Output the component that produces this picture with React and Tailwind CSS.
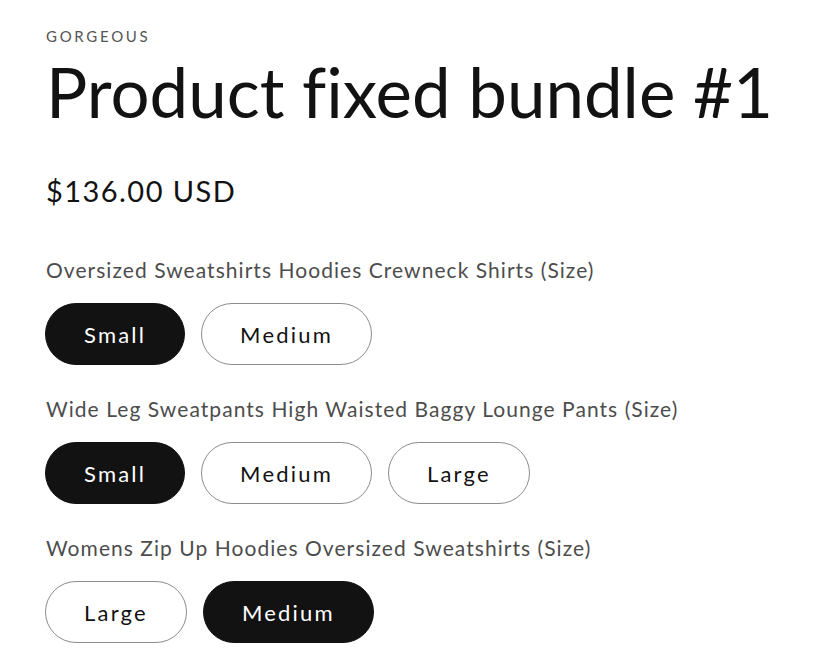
import { useState } from 'react';

const groups = [
  {
    label: 'Oversized Sweatshirts Hoodies Crewneck Shirts (Size)',
    options: ['Small', 'Medium'],
    selected: 'Small',
  },
  {
    label: 'Wide Leg Sweatpants High Waisted Baggy Lounge Pants (Size)',
    options: ['Small', 'Medium', 'Large'],
    selected: 'Small',
  },
  {
    label: 'Womens Zip Up Hoodies Oversized Sweatshirts (Size)',
    options: ['Large', 'Medium'],
    selected: 'Medium',
  },
];

function VariantPill({ value, active, onClick }) {
  const className = active
    ? 'border-[#121212] bg-[#121212] text-white'
    : 'border-[#8c8c8c] bg-white text-[#121212]';

  return (
    <button
      type="button"
      onClick={onClick}
      className={`flex h-[62px] items-center justify-center rounded-full border px-[38px] text-[22px] tracking-[0.1em] ${className}`}
    >
      {value}
    </button>
  );
}

export default function App() {
  const [picked, setPicked] = useState(groups.map((g) => g.selected));

  const choose = (index, value) => {
    setPicked((prev) => prev.map((v, i) => (i === index ? value : v)));
  };

  return (
    <div
      className="min-h-screen bg-white pl-[46px] pt-[24px] text-[#121212] [font-variant-ligatures:none]"
      style={{ fontFamily: 'Lato, "Open Sans", sans-serif' }}
    >
      <p className="h-[24px] text-[15px] leading-[24px] tracking-[0.18em] text-[#555]">
        GORGEOUS
      </p>

      <h1 className="mt-[4px] h-[80px] text-[69px] leading-[80px] tracking-[0]">
        Product fixed bundle #1
      </h1>

      <p className="mt-[41px] h-[36px] text-[29px] leading-[36px] tracking-[0.05em]">
        $136.00 USD
      </p>

      <div className="mt-[47px]">
        {groups.map((group, index) => (
          <fieldset key={group.label} className={index === 0 ? '' : 'mt-[30px]'}>
            <legend className="h-[28px] text-[21px] leading-[28px] tracking-[0.05em] text-[#4d4d4d]">
              {group.label}
            </legend>

            <div className="-ml-px mt-[19px] flex gap-[16px]">
              {group.options.map((opt) => (
                <VariantPill
                  key={opt}
                  value={opt}
                  active={picked[index] === opt}
                  onClick={() => choose(index, opt)}
                />
              ))}
            </div>
          </fieldset>
        ))}
      </div>
    </div>
  );
}
